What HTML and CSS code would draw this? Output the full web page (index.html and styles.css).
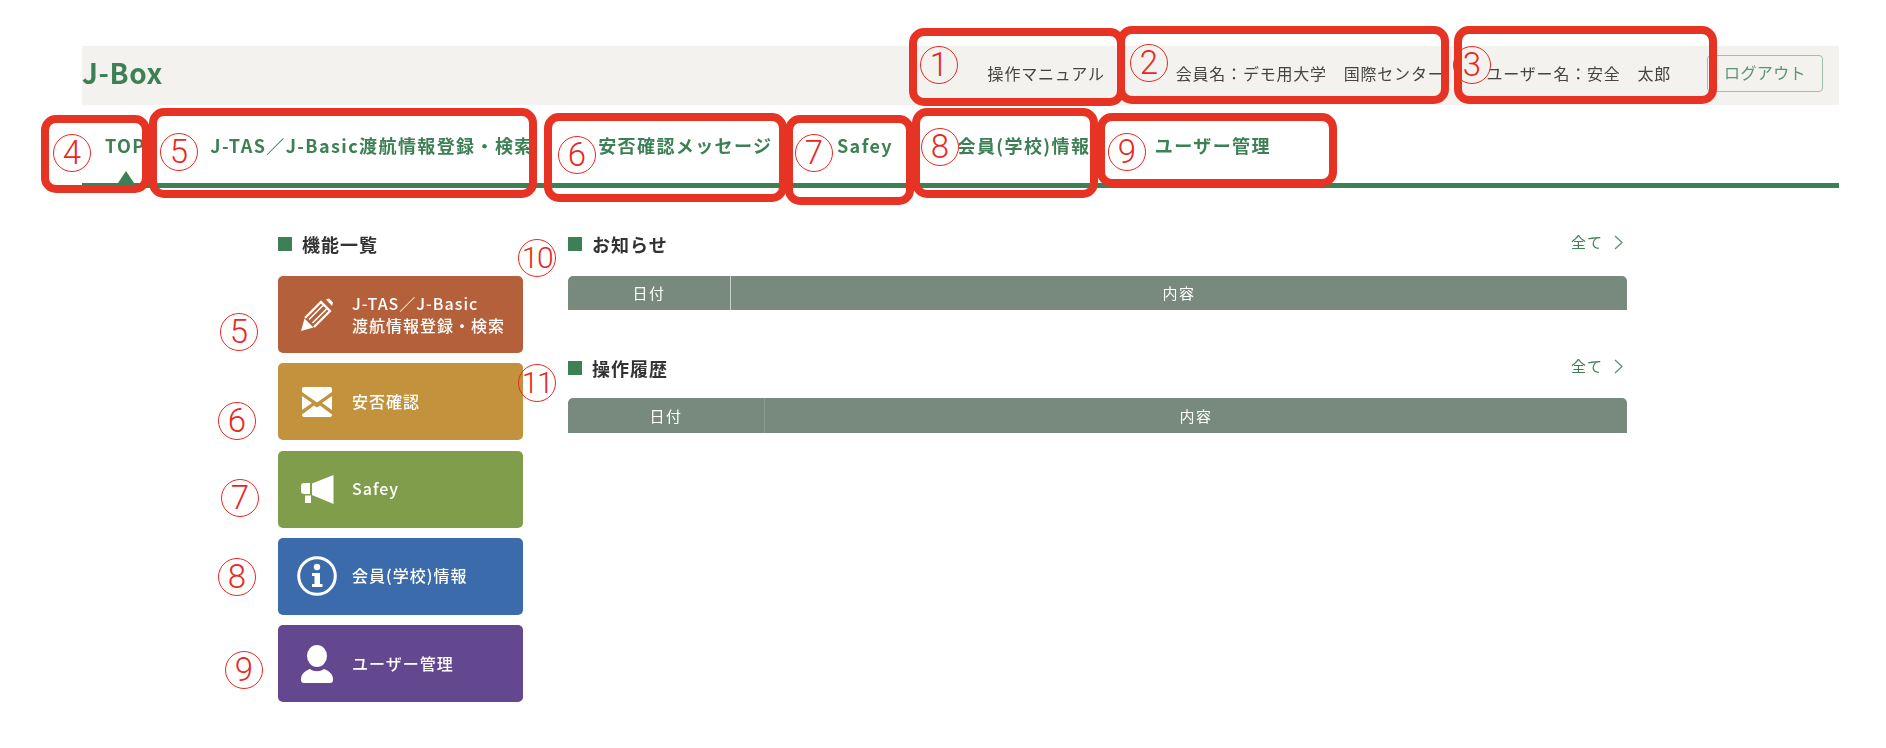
FILE: index.html
```html
<!DOCTYPE html>
<html lang="ja">
<head>
<meta charset="utf-8">
<title>J-Box</title>
<link rel="stylesheet" href="styles.css">
</head>
<body>
<div class="page">
  <header class="topbar">
    <div class="logo">J-Box</div>
    <a class="manual">操作マニュアル</a>
    <span class="member">会員名：デモ用大学　国際センター</span>
    <span class="user">ユーザー名：安全　太郎</span>
    <a class="logout">ログアウト</a>
  </header>
  <nav class="nav">
    <a class="nav-item active">TOP</a>
    <a class="nav-item">J-TAS／J-Basic渡航情報登録・検索</a>
    <a class="nav-item">安否確認メッセージ</a>
    <a class="nav-item">Safey</a>
    <a class="nav-item">会員(学校)情報</a>
    <a class="nav-item">ユーザー管理</a>
  </nav>
  <main class="main">
    <section class="functions">
      <h2 class="title">機能一覧</h2>
      <div class="cards">
        <a class="card c-tas">
          <span class="icon"><svg width="34" height="34" viewBox="0 0 34 34"><path d="M1 33 4.500 20.500 13.500 29.500Z" fill="#fff"/><path d="M5 20 21 4 30 13 14 29" fill="none" stroke="#fff" stroke-width="2.300"/><path d="M9 21.500 23 7.500M12.500 25 26.500 11" stroke="#fff" stroke-width="1.600"/><path d="M26 1.500 29 0.500 33 4.500 32 8Z" fill="#fff"/></svg></span>
          <span class="label">J-TAS／J-Basic<br>渡航情報登録・検索</span>
        </a>
        <a class="card c-safety">
          <span class="icon"><svg width="30" height="30" viewBox="0 0 30 30" fill="#fff"><path d="M2 0H28a2 2 0 0 1 2 2V5L15 15.500 0 5V2a2 2 0 0 1 2-2Z"/><path d="M0 9 10 16 0 23Z"/><path d="M30 9 20 16 30 23Z"/><path d="M0 27.500 12 18.500 15 20.500 18 18.500 30 27.500V28a2 2 0 0 1-2 2H2a2 2 0 0 1-2-2Z"/></svg></span>
          <span class="label">安否確認</span>
        </a>
        <a class="card c-safey">
          <span class="icon"><svg width="33" height="29" viewBox="0 0 33 29" fill="#fff"><path d="M11 8.500 32.500 0V29L11 20Z"/><path d="M3 8H9V19H3a3 3 0 0 1-3-3V11a3 3 0 0 1 3-3Z"/><path d="M4 20.500H10V28H4Z"/></svg></span>
          <span class="label">Safey</span>
        </a>
        <a class="card c-member">
          <span class="icon"><svg width="40" height="40" viewBox="0 0 40 40"><circle cx="20" cy="20" r="18.300" fill="none" stroke="#fff" stroke-width="3"/><circle cx="20" cy="11" r="3.200" fill="#fff"/><path d="M15 17H23V28H25.500V31H15V28H17.500V20H15Z" fill="#fff"/></svg></span>
          <span class="label">会員(学校)情報</span>
        </a>
        <a class="card c-users">
          <span class="icon"><svg width="32" height="38" viewBox="0 0 32 38" fill="#fff"><ellipse cx="16" cy="11" rx="10" ry="11"/><path d="M3 38H29a3 3 0 0 0 3-3V34C32 28 26 25 23 24 19 27 13 27 9 24 6 25 0 28 0 34V35a3 3 0 0 0 3 3Z"/></svg></span>
          <span class="label">ユーザー管理</span>
        </a>
      </div>
    </section>
    <section class="info">
      <div class="block">
        <div class="block-head">
          <h2 class="title">お知らせ</h2>
          <a class="all">全て<svg class="chev" width="9" height="15" viewBox="0 0 9 15"><path d="M1 1 8 7.500 1 14" fill="none" stroke="#5d9473" stroke-width="1.300"/></svg></a>
        </div>
        <table class="table notices"><thead><tr><th class="date">日付</th><th>内容</th></tr></thead></table>
      </div>
      <div class="block second">
        <div class="block-head">
          <h2 class="title">操作履歴</h2>
          <a class="all">全て<svg class="chev" width="9" height="15" viewBox="0 0 9 15"><path d="M1 1 8 7.500 1 14" fill="none" stroke="#5d9473" stroke-width="1.300"/></svg></a>
        </div>
        <table class="table history"><thead><tr><th class="date">日付</th><th>内容</th></tr></thead></table>
      </div>
    </section>
  </main>
</div>
<div class="notes">
  <i class="box b1"></i><i class="box b2"></i><i class="box b3"></i><i class="box b4"></i><i class="box b5"></i><i class="box b6"></i><i class="box b7"></i><i class="box b8"></i><i class="box b9"></i>
  <b class="mark m1">1</b><b class="mark m2">2</b><b class="mark m3">3</b><b class="mark m4">4</b><b class="mark m5">5</b><b class="mark m6">6</b><b class="mark m7">7</b><b class="mark m8">8</b><b class="mark m9">9</b><b class="mark wide m10">10</b><b class="mark wide m11">11</b>
  <b class="mark s5">5</b><b class="mark s6">6</b><b class="mark s7">7</b><b class="mark s8">8</b><b class="mark s9">9</b>
</div>
</body>
</html>
```
FILE: styles.css
```css
* { box-sizing: border-box; }
html, body { margin: 0; padding: 0; background: #fff; }
body {
  position: relative;
  height: 748px;
  overflow: hidden;
  font-family: "Noto Sans CJK JP", "Noto Sans", sans-serif;
  color: #333;
}
.page { padding: 46px 47px 0 82px; filter: blur(0.5px); }

.topbar {
  display: flex;
  align-items: center;
  height: 59px;
  background: #f3f2ee;
  font-size: 16px;
  letter-spacing: 0.8px;
  line-height: 20px;
  color: #444;
}
.logo {
  font-size: 28px;
  font-weight: 700;
  letter-spacing: 0.6px;
  color: #3d8055;
  line-height: 30px;
  margin-right: auto;
  margin-top: -8px;
}
.manual, .member, .user { position: relative; top: -3px; }
.member { margin-left: 71px; }
.user { margin-left: 42px; }
.logout {
  margin-left: 36px;
  margin-right: 16px;
  width: 116px;
  height: 37px;
  margin-top: -4px;
  border: 1px solid #9cc0a9;
  border-radius: 4px;
  color: #5d9473;
  letter-spacing: 0.4px;
  text-align: center;
  line-height: 33px;
}

.nav {
  display: flex;
  height: 83px;
  border-bottom: 5px solid #3d8055;
  font-size: 18px;
  font-weight: 700;
  letter-spacing: 1.4px;
  line-height: 24px;
  color: #3d8055;
}
.nav-item {
  position: relative;
  padding: 28px 31.500px 0 33px;
  white-space: nowrap;
}
.nav-item:first-child { padding-left: 23px; }
.active::after {
  content: "";
  position: absolute;
  left: 36px;
  bottom: 0;
  border-left: 8px solid transparent;
  border-right: 8px solid transparent;
  border-bottom: 12px solid #3d8055;
}

.main { display: flex; gap: 45px; padding: 44px 0 0 196px; }
.functions { width: 245px; }
.info { width: 1059px; }

.title {
  display: flex;
  align-items: center;
  margin: 0;
  height: 24px;
  font-size: 18px;
  font-weight: 700;
  letter-spacing: 1px;
  line-height: 24px;
  color: #333;
}
.title::before {
  content: "";
  width: 14px;
  height: 14px;
  margin-right: 10px;
  background: #3d8055;
}

.cards { display: grid; gap: 10.250px; margin-top: 20px; }
.card {
  display: flex;
  align-items: center;
  height: 77px;
  padding-left: 19px;
  border-radius: 5px;
  color: #fff;
  font-size: 16px;
  font-weight: 500;
  letter-spacing: 1px;
  line-height: 22px;
}
.label { position: relative; top: -1px; }
.icon { display: flex; align-items: center; justify-content: center; flex: none; width: 40px; margin-right: 15px; }
.c-tas { background: #b4603a; }
.c-safety { background: #c3923c; }
.c-safey { background: #7f9d4b; }
.c-member { background: #3c6bab; }
.c-users { background: #63478f; }

.block-head { display: flex; align-items: center; margin-bottom: 20px; }
.all {
  display: flex;
  align-items: center;
  margin-left: auto;
  margin-top: -4px;
  padding-right: 4px;
  font-size: 15px;
  line-height: 20px;
  letter-spacing: 1px;
  color: #3d8055;
}
.chev { margin-left: 11px; }
.second { margin-top: 46px; }
.second .block-head { margin-bottom: 18px; }

.table {
  width: 100%;
  table-layout: fixed;
  border-collapse: separate;
  border-spacing: 0;
}
.table th {
  height: 34px;
  padding: 0;
  background: #78897d;
  color: #fff;
  font-size: 15px;
  font-weight: 400;
  letter-spacing: 1.5px;
  line-height: 20px;
  text-align: center;
}
.table .date { border-right: 1px solid #c9d1cb; border-top-left-radius: 5px; }
.table th:last-child { border-top-right-radius: 5px; }
.notices .date { width: 163px; }
.history .date { width: 197px; border-right-color: #8c9b90; }
.history th { height: 35px; }

.notes { position: absolute; inset: 0; }
.box {
  position: absolute;
  z-index: 1;
  border: 8px solid #e73323;
  border-radius: 15px;
}
.b1 { left: 909px; top: 28px; width: 216px; height: 78px; }
.b2 { left: 1117px; top: 26px; width: 332px; height: 78px; }
.b3 { left: 1454px; top: 26px; width: 263px; height: 78px; }
.b4 { left: 41px; top: 115px; width: 109px; height: 78px; }
.b5 { left: 149px; top: 108px; width: 388px; height: 90px; }
.b6 { left: 544px; top: 113px; width: 243px; height: 89px; }
.b7 { left: 785px; top: 115px; width: 129px; height: 90px; }
.b8 { left: 912px; top: 108px; width: 186px; height: 90px; }
.b9 { left: 1097px; top: 113px; width: 240px; height: 74px; }

.mark {
  position: absolute;
  display: flex;
  align-items: center;
  justify-content: center;
  width: 38px;
  height: 38px;
  border: 1.5px solid #e8281e;
  border-radius: 50%;
  font-family: Roboto, "Open Sans", sans-serif;
  font-size: 33px;
  font-weight: 300;
  line-height: 34px;
  color: #e8281e;
}
.wide { font-size: 30px; letter-spacing: -1.5px; }
.m1 { left: 920px; top: 46px; }
.m2 { left: 1130px; top: 44px; }
.m3 { left: 1453px; top: 46px; }
.m4 { left: 53px; top: 134px; }
.m5 { left: 160px; top: 133px; }
.m6 { left: 558px; top: 136px; }
.m7 { left: 795px; top: 134px; }
.m8 { left: 921px; top: 128px; }
.m9 { left: 1108px; top: 133px; }
.m10 { left: 518px; top: 239px; }
.m11 { left: 518px; top: 364px; }
.s5 { left: 220px; top: 313px; }
.s6 { left: 218px; top: 402px; }
.s7 { left: 221px; top: 479px; }
.s8 { left: 218px; top: 558px; }
.s9 { left: 225px; top: 651px; }
```
